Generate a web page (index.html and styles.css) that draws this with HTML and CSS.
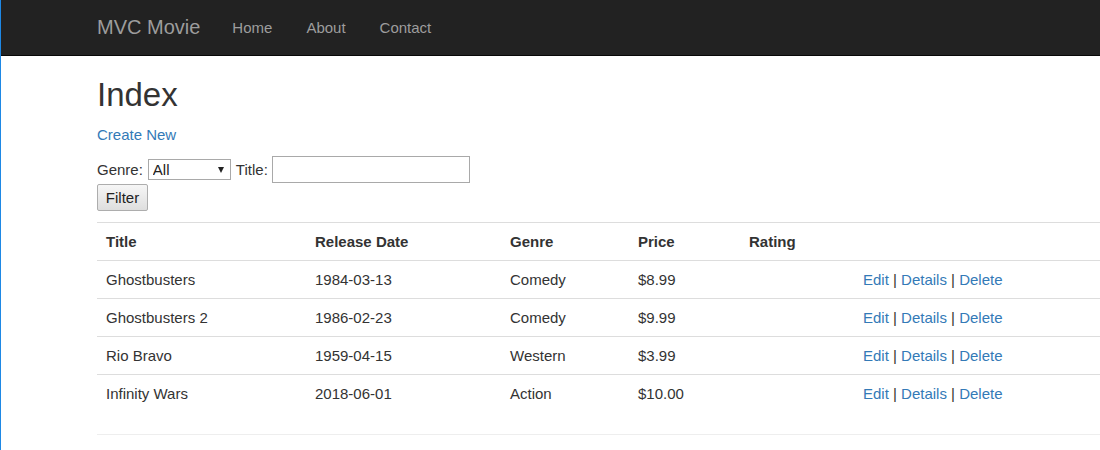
FILE: index.html
```html
<!DOCTYPE html>
<html lang="en">
<head>
<meta charset="utf-8">
<title>Index - MVC Movie</title>
<link rel="stylesheet" href="styles.css">
</head>
<body>
<nav class="navbar">
  <div class="container nav-inner">
    <a class="brand" href="#">MVC Movie</a>
    <ul class="nav-links">
      <li><a href="#">Home</a></li>
      <li><a href="#">About</a></li>
      <li><a href="#">Contact</a></li>
    </ul>
  </div>
</nav>
<main class="container body-content">
  <h2 class="page-title">Index</h2>
  <p class="create"><a href="#">Create New</a></p>
  <form class="filter-form">
    <div class="filter-row">
      <span class="label">Genre:</span>
      <span class="select-wrap"><select class="select"><option>All</option></select></span>
      <span class="label">Title:</span>
      <input class="text-input" type="text">
    </div>
    <button class="btn" type="button">Filter</button>
  </form>
  <table class="table">
    <thead>
      <tr>
        <th class="c1">Title</th>
        <th class="c2">Release Date</th>
        <th class="c3">Genre</th>
        <th class="c4">Price</th>
        <th class="c5">Rating</th>
        <th class="c6"></th>
      </tr>
    </thead>
    <tbody>
      <tr>
        <td>Ghostbusters</td><td>1984-03-13</td><td>Comedy</td><td>$8.99</td><td></td>
        <td><a href="#">Edit</a> | <a href="#">Details</a> | <a href="#">Delete</a></td>
      </tr>
      <tr>
        <td>Ghostbusters 2</td><td>1986-02-23</td><td>Comedy</td><td>$9.99</td><td></td>
        <td><a href="#">Edit</a> | <a href="#">Details</a> | <a href="#">Delete</a></td>
      </tr>
      <tr>
        <td>Rio Bravo</td><td>1959-04-15</td><td>Western</td><td>$3.99</td><td></td>
        <td><a href="#">Edit</a> | <a href="#">Details</a> | <a href="#">Delete</a></td>
      </tr>
      <tr>
        <td>Infinity Wars</td><td>2018-06-01</td><td>Action</td><td>$10.00</td><td></td>
        <td><a href="#">Edit</a> | <a href="#">Details</a> | <a href="#">Delete</a></td>
      </tr>
    </tbody>
  </table>
  <hr class="footer-rule">
</main>
</body>
</html>
```
FILE: styles.css
```css
html {
  overflow: hidden;
}
body {
  margin: 0;
  border-left: 1px solid #1e88e5;
  min-height: 450px;
  box-sizing: border-box;
  font-family: "Liberation Sans", Arial, Helvetica, sans-serif;
  font-size: 15px;
  line-height: 21px;
  color: #333;
  background: #fff;
}
a {
  color: #337ab7;
  text-decoration: none;
}
.container {
  padding-left: 96px;
}
.navbar {
  background: #222;
  border-bottom: 1px solid #080808;
  height: 55px;
}
.nav-inner {
  display: flex;
  align-items: center;
  height: 54px;
}
.brand {
  color: #9d9d9d;
  font-size: 20px;
  margin-right: 32px;
}
.nav-links {
  display: flex;
  gap: 34px;
  list-style: none;
  margin: 0;
  padding: 0;
}
.nav-links a {
  color: #9d9d9d;
  font-size: 15px;
}
.body-content {
  padding-top: 21px;
}
.page-title {
  margin: 0;
  font-size: 33px;
  font-weight: 500;
  line-height: 36px;
}
.create {
  margin: 11px 0 0;
}
.filter-form {
  margin-top: 11px;
}
.filter-row {
  display: flex;
  align-items: center;
  height: 27px;
}
.label {
  margin-right: 5px;
}
.select-wrap {
  position: relative;
  display: inline-block;
  margin-right: 5px;
}
.select-wrap::after {
  content: "";
  position: absolute;
  right: 7px;
  top: 8px;
  border-left: 3.5px solid transparent;
  border-right: 3.5px solid transparent;
  border-top: 6px solid #222;
  pointer-events: none;
}
.select {
  appearance: none;
  -webkit-appearance: none;
  display: block;
  width: 83px;
  height: 21px;
  box-sizing: border-box;
  border: 1px solid #a9a9a9;
  border-radius: 0;
  background: #fff;
  font-family: inherit;
  font-size: 15px;
  color: #222;
  padding: 0 0 0 4px;
  margin: 0;
}
.text-input {
  width: 198px;
  height: 27px;
  box-sizing: border-box;
  border: 1px solid #a9a9a9;
  border-radius: 0;
  margin: 0 0 0 -1px;
  padding: 0 4px;
  font-family: inherit;
  font-size: 15px;
}
.btn {
  display: block;
  margin-top: 1px;
  width: 51px;
  height: 27px;
  box-sizing: border-box;
  border: 1px solid #adadad;
  border-radius: 2px;
  background: linear-gradient(#f6f6f6, #dedede);
  font-family: inherit;
  font-size: 15px;
  color: #222;
  padding: 0;
}
.table {
  margin-top: 11px;
  width: 100%;
  border-collapse: collapse;
  table-layout: fixed;
}
.table th,
.table td {
  text-align: left;
  padding: 8px 9px;
  border-top: 1px solid #ddd;
  line-height: 21px;
  height: 21px;
  white-space: nowrap;
}
.table th {
  font-weight: bold;
}
.table td {
  font-size: 15px;
}
.c1 { width: 191px; }
.c2 { width: 177px; }
.c3 { width: 110px; }
.c4 { width: 93px; }
.c5 { width: 96px; }
.footer-rule {
  margin: 22px 0 0;
  border: 0;
  border-top: 1px solid #eee;
}
```
